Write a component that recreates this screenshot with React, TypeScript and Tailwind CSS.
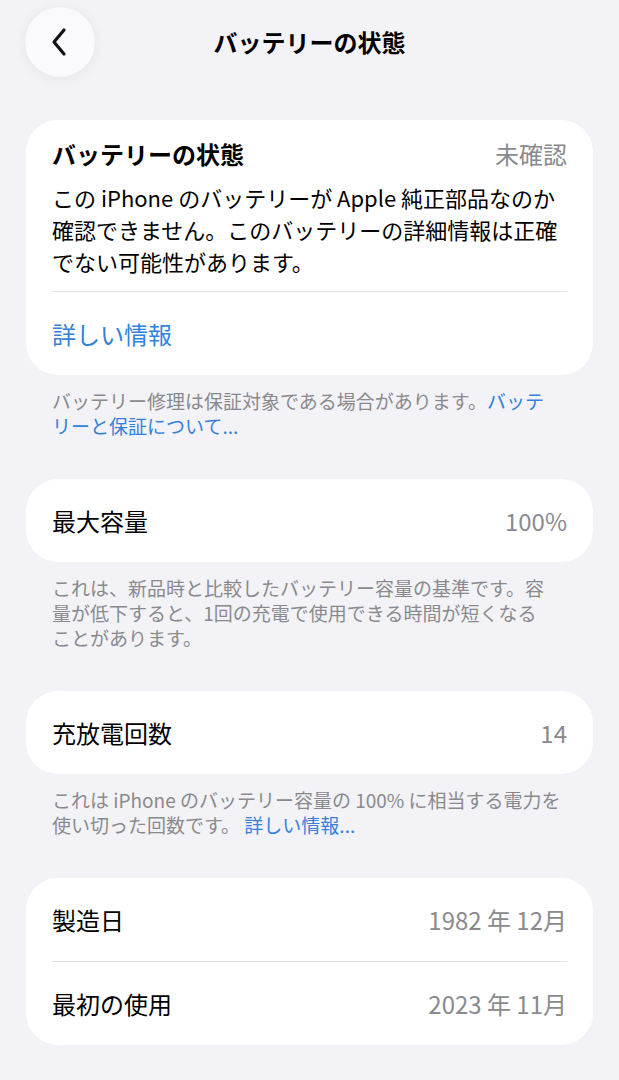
import React from "react";

const font = { fontFamily: '"Noto Sans CJK JP", "Noto Sans", sans-serif' };

function BackButton() {
  return (
    <button className="flex h-[70px] w-[70px] items-center justify-center rounded-full bg-[#fafafc] shadow-[0_2px_14px_rgba(0,0,0,0.06)]">
      <svg width="22" height="30" viewBox="0 0 22 30" fill="none">
        <path
          d="M15 3 L5 15 L15 27"
          stroke="#111"
          strokeWidth="3.2"
          strokeLinecap="round"
          strokeLinejoin="round"
        />
      </svg>
    </button>
  );
}

function Row({ label, value }: { label: string; value: React.ReactNode }) {
  return (
    <div className="flex h-[83px] items-center justify-between px-[26px]">
      <span className="text-[24px] leading-[32px] text-black">{label}</span>
      <span className="text-[24px] leading-[32px] text-[#8a8a8e]">{value}</span>
    </div>
  );
}

function Footer({ children }: { children: React.ReactNode }) {
  return (
    <p className="mt-[13px] whitespace-nowrap px-[26px] text-[19px] leading-[25px] text-[#8a8a8e]">
      {children}
    </p>
  );
}

export default function App() {
  return (
    <div className="min-h-[1080px] w-full bg-[#f2f2f7]" style={font}>
      {/* navigation bar */}
      <div className="relative flex h-[84px] items-center justify-center">
        <div className="absolute left-[25px] top-[7px]">
          <BackButton />
        </div>
        <h1 className="text-[24px] font-bold leading-[32px] text-black">バッテリーの状態</h1>
      </div>

      <div className="px-[26px] pt-[36px]">
        {/* battery status card */}
        <div className="rounded-[32px] bg-white">
          <div className="px-[26px] pt-[18px]">
            <div className="flex items-center justify-between">
              <span className="text-[24px] font-bold leading-[32px] text-black">バッテリーの状態</span>
              <span className="text-[24px] leading-[32px] text-[#8a8a8e]">未確認</span>
            </div>
            <p className="mt-[11px] whitespace-nowrap text-[22px] leading-[32px] text-black">
              この iPhone のバッテリーが Apple 純正部品なのか
              <br />
              確認できません。このバッテリーの詳細情報は正確
              <br />
              でない可能性があります。
            </p>
            <div className="mt-[14px] h-px bg-[#e3e3e6]" />
          </div>
          <div className="flex h-[83px] items-center px-[26px]">
            <span className="text-[24px] leading-[32px] text-[#3281dc]">詳しい情報</span>
          </div>
        </div>
        <Footer>
          バッテリー修理は保証対象である場合があります。
          <span className="text-[#3281dc]">
            バッテ
            <br />
            リーと保証について...
          </span>
        </Footer>

        {/* maximum capacity */}
        <div className="mt-[41px] rounded-[32px] bg-white">
          <Row label="最大容量" value="100%" />
        </div>
        <Footer>
          これは、新品時と比較したバッテリー容量の基準です。容
          <br />
          量が低下すると、1回の充電で使用できる時間が短くなる
          <br />
          ことがあります。
        </Footer>

        {/* cycle count */}
        <div className="mt-[41px] rounded-[32px] bg-white">
          <Row label="充放電回数" value="14" />
        </div>
        <Footer>
          これは iPhone のバッテリー容量の 100% に相当する電力を
          <br />
          使い切った回数です。 <span className="text-[#3281dc]">詳しい情報...</span>
        </Footer>

        {/* dates */}
        <div className="mt-[41px] rounded-[32px] bg-white">
          <Row label="製造日" value="1982 年 12月" />
          <div className="mx-[26px] h-px bg-[#e3e3e6]" />
          <Row label="最初の使用" value="2023 年 11月" />
        </div>
      </div>
    </div>
  );
}
